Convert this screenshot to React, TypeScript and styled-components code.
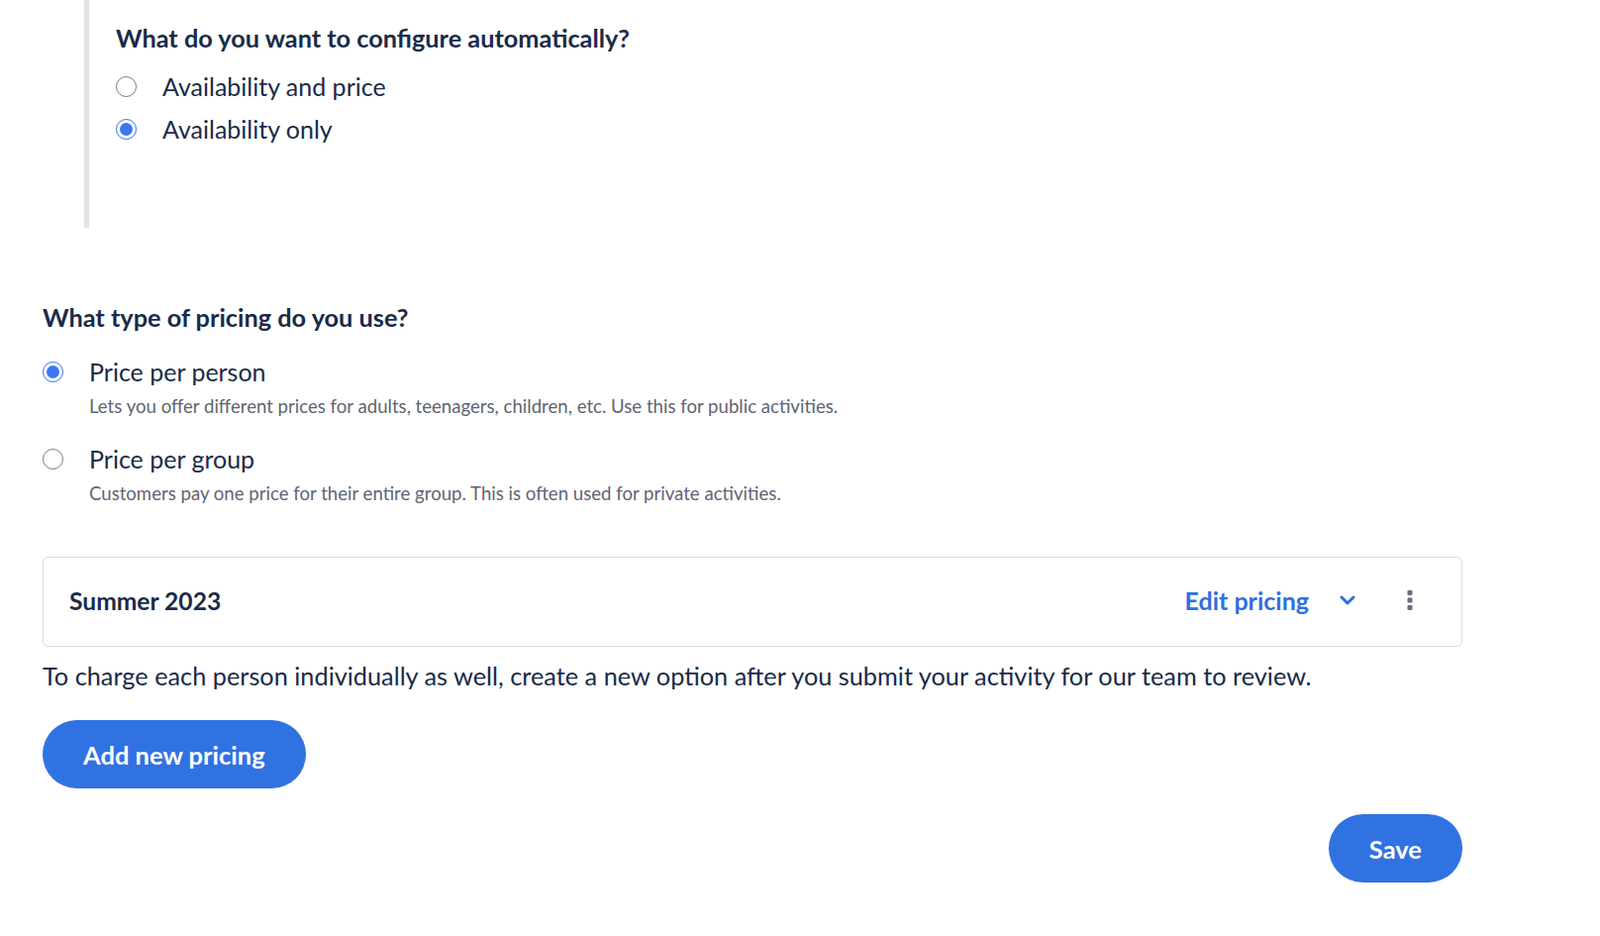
import React, { useState } from 'react';
import styled, { createGlobalStyle } from 'styled-components';

const GlobalStyle = createGlobalStyle`
  * { box-sizing: border-box; }
  body {
    margin: 0;
    background: #ffffff;
    font-family: Lato, "Noto Sans", sans-serif;
    color: #1a2b49;
  }
`;

const Page = styled.main`
  width: 1616px;
  padding: 0 0 0 43px;
`;

const AutoBlock = styled.section`
  margin-left: 42px;
  border-left: 5px solid #e2e3e8;
  padding: 22px 0 0 27px;
  height: 230px;
`;

const Question = styled.h2`
  margin: 0;
  font-size: 25.3px;
  line-height: 32px;
  font-weight: 700;
  color: #1a2b49;
`;

const RadioList = styled.div<{ $gap: number; $top: number }>`
  display: flex;
  flex-direction: column;
  gap: ${(p) => p.$gap}px;
  margin-top: ${(p) => p.$top}px;
`;

const RadioRow = styled.label`
  display: grid;
  grid-template-columns: 21px 1fr;
  column-gap: 26px;
  align-items: center;
  cursor: pointer;
`;

const RadioCircle = styled.span<{ $checked: boolean }>`
  width: 21px;
  height: 21px;
  border-radius: 50%;
  border: 1.5px solid ${(p) => (p.$checked ? '#2f6fe4' : '#767676')};
  display: flex;
  align-items: center;
  justify-content: center;
  &::after {
    content: '';
    width: 13px;
    height: 13px;
    border-radius: 50%;
    background: ${(p) => (p.$checked ? '#3b78f0' : 'transparent')};
  }
`;

const RadioLabel = styled.span`
  font-size: 25px;
  line-height: 32px;
  color: #1a2b49;
`;

const RadioHint = styled.span`
  grid-column: 2;
  margin-top: 7px;
  font-size: 18.6px;
  line-height: 24px;
  color: #5f6473;
`;

const PricingSection = styled.section`
  padding-top: 74px;
  width: 1434px;
`;

const Card = styled.div`
  margin-top: 52px;
  height: 91px;
  border: 1px solid #dcdde1;
  border-radius: 6px;
  display: flex;
  align-items: center;
  padding: 0 49px 3px 26px;
`;

const CardTitle = styled.div`
  flex: 1;
  font-size: 24.6px;
  font-weight: 700;
  color: #1a2b49;
`;

const EditLink = styled.button`
  border: none;
  background: none;
  padding: 0;
  font: inherit;
  font-size: 25px;
  font-weight: 700;
  color: #2f6fe4;
  display: flex;
  align-items: center;
  gap: 31px;
  cursor: pointer;
`;

const MoreButton = styled.button`
  margin-left: 52px;
  border: none;
  background: none;
  padding: 0;
  display: flex;
  cursor: pointer;
`;

const Note = styled.p`
  margin: 13px 0 0;
  font-size: 25.3px;
  line-height: 32px;
  color: #1a2b49;
`;

const PillButton = styled.button`
  height: 69px;
  padding: 0 41px;
  border: none;
  border-radius: 35px;
  background: #3172e3;
  color: #ffffff;
  font-family: inherit;
  font-size: 25.5px;
  font-weight: 700;
  cursor: pointer;
`;

const AddRow = styled.div`
  margin-top: 29px;
`;

const SaveRow = styled.div`
  margin-top: 26px;
  display: flex;
  justify-content: flex-end;
`;

const Chevron = () => (
  <svg width="16" height="10" viewBox="0 0 16 10" fill="none">
    <path d="M2 2l6 6 6-6" stroke="#2f6fe4" strokeWidth="3" strokeLinecap="round" strokeLinejoin="round" />
  </svg>
);

const Kebab = () => (
  <svg width="6" height="20" viewBox="0 0 6 20" fill="#6a6e7d">
    <rect x="0.5" y="0" width="5" height="5" rx="1.2" />
    <rect x="0.5" y="7.5" width="5" height="5" rx="1.2" />
    <rect x="0.5" y="15" width="5" height="5" rx="1.2" />
  </svg>
);

interface RadioProps {
  checked: boolean;
  label: string;
  hint?: string;
  onSelect: () => void;
}

const Radio: React.FC<RadioProps> = ({ checked, label, hint, onSelect }) => (
  <RadioRow onClick={onSelect}>
    <RadioCircle $checked={checked} />
    <RadioLabel>{label}</RadioLabel>
    {hint && <RadioHint>{hint}</RadioHint>}
  </RadioRow>
);

const App: React.FC = () => {
  const [mode, setMode] = useState('availability');
  const [pricing, setPricing] = useState('person');

  return (
    <Page>
      <GlobalStyle />
      <AutoBlock>
        <Question>What do you want to configure automatically?</Question>
        <RadioList $gap={11} $top={17}>
          <Radio
            checked={mode === 'both'}
            label="Availability and price"
            onSelect={() => setMode('both')}
          />
          <Radio
            checked={mode === 'availability'}
            label="Availability only"
            onSelect={() => setMode('availability')}
          />
        </RadioList>
      </AutoBlock>

      <PricingSection>
        <Question>What type of pricing do you use?</Question>
        <RadioList $gap={25} $top={23}>
          <Radio
            checked={pricing === 'person'}
            label="Price per person"
            hint="Lets you offer different prices for adults, teenagers, children, etc. Use this for public activities."
            onSelect={() => setPricing('person')}
          />
          <Radio
            checked={pricing === 'group'}
            label="Price per group"
            hint="Customers pay one price for their entire group. This is often used for private activities."
            onSelect={() => setPricing('group')}
          />
        </RadioList>

        <Card>
          <CardTitle>Summer 2023</CardTitle>
          <EditLink>
            Edit pricing
            <Chevron />
          </EditLink>
          <MoreButton aria-label="More options">
            <Kebab />
          </MoreButton>
        </Card>

        <Note>
          To charge each person individually as well, create a new option after you submit your activity for our team to review.
        </Note>

        <AddRow>
          <PillButton>Add new pricing</PillButton>
        </AddRow>

        <SaveRow>
          <PillButton>Save</PillButton>
        </SaveRow>
      </PricingSection>
    </Page>
  );
};

export default App;
